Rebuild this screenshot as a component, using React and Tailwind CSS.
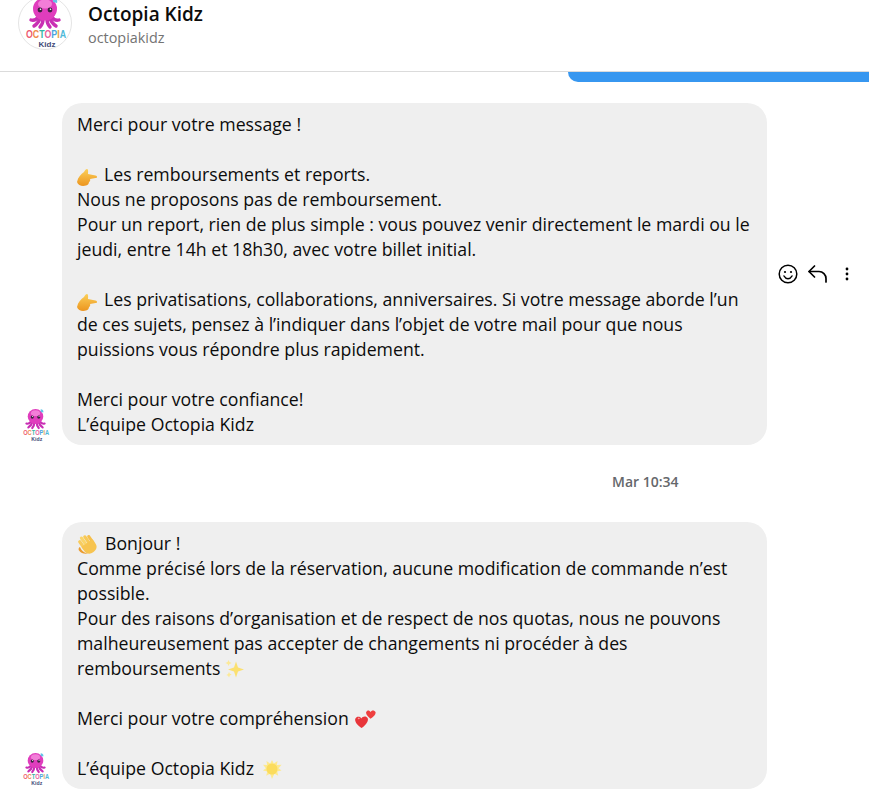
function Logo({ size, circle }) {
  return (
    <svg width={size} height={size} viewBox="0 0 54 54" className="shrink-0">
      {circle && <circle cx="27" cy="27" r="26.5" fill="#fff" stroke="#e4e4e4" />}
      {/* tentacles */}
      <g fill="none" stroke="#c92fb4" strokeWidth="3.4" strokeLinecap="round">
        <path d="M21 20c-2 3-5 5-8 4" />
        <path d="M33 20c2 3 5 5 8 4" />
        <path d="M22 22c-1 4-3 6-6 8" />
        <path d="M32 22c1 4 3 6 6 8" />
        <path d="M25 23c0 4-1 6-3 8" />
        <path d="M29 23c0 4 1 6 3 8" />
      </g>
      <ellipse cx="27" cy="13" rx="12" ry="11.500" fill="#e03dbd" />
      <ellipse cx="27" cy="8" rx="7" ry="4.500" fill="#f27ed8" />
      <path d="M35 2c3 0 5 2 4 5l-4-1z" fill="#63c4e8" />
      <circle cx="22" cy="14" r="2.400" fill="#3b2340" />
      <circle cx="32" cy="14" r="2.400" fill="#3b2340" />
      <circle cx="22.500" cy="13.200" r="0.800" fill="#fff" />
      <circle cx="32.500" cy="13.200" r="0.800" fill="#fff" />
      <text x="8" y="42" textLength="40" lengthAdjust="spacingAndGlyphs" fontSize="10.500" fontWeight="700" fontFamily="Liberation Sans, sans-serif">
        <tspan fill="#ee5a6f">O</tspan>
        <tspan fill="#f08a4b">C</tspan>
        <tspan fill="#35b6a6">T</tspan>
        <tspan fill="#e8609b">O</tspan>
        <tspan fill="#4aa5de">P</tspan>
        <tspan fill="#e8a33d">I</tspan>
        <tspan fill="#4fb9d8">A</tspan>
      </text>
      <text x="29" y="50.500" textAnchor="middle" fontSize="8" fontWeight="700" fill="#3f4a78" fontFamily="Liberation Sans, sans-serif">Kidz</text>
    </svg>
  );
}

function PointHand({ id }) {
  return (
    <svg width="20" height="17" viewBox="0 0 20 17" className="mr-[7px] inline-block align-[-5px]">
      <defs>
        <linearGradient id={id} x1="0" y1="0" x2="0" y2="1">
          <stop offset="0" stopColor="#fbcf58" />
          <stop offset="1" stopColor="#ec951f" />
        </linearGradient>
      </defs>
      <path d="M0 13C1 8 4 5 7 3 8 1 9 0 10 0c1.500 0 1 3 1 5l7.500 1.500c2 .5 2 2.500 0 2.500L13 10c.5 1 0 2.500-1 3 0 1.500-1 3-3 3.500C6 17.500 1 17 0 13z" fill={`url(#${id})`} />
    </svg>
  );
}

function WaveHand() {
  return (
    <svg width="21" height="19" viewBox="0 0 21 19" className="mr-[7px] inline-block align-[-4px]">
      <g transform="rotate(-35 11 10)">
        <rect x="4.500" y="1" width="3.200" height="11" rx="1.600" fill="#f8cc5e" />
        <rect x="8" y="-1" width="3.200" height="12" rx="1.600" fill="#fad468" />
        <rect x="11.500" y="0" width="3.200" height="12" rx="1.600" fill="#f8c955" />
        <rect x="15" y="2" width="3" height="10" rx="1.500" fill="#f6bf4a" />
        <path d="M4.500 8h13.500v5c0 4-3 6-7 6s-6.500-3-6.500-6z" fill="#f7c450" />
      </g>
      <path d="M3 12c1 3 4 6 8 6.500-3 .8-7 0-9-3-1-1.500 0-3 1-3.500z" fill="#ea9c30" />
    </svg>
  );
}

function Sparkles() {
  return (
    <svg width="19" height="18" viewBox="0 0 19 18" className="inline-block align-[-3px]">
      <path d="M11 1.500l2 5.900 6 2.100-6 2.100-2 5.900-2-5.900-6-2.100 6-2.100z" fill="#fbe070" />
      <path d="M3.500 0l1 2.100 2.100.9-2.100.9-1 2.100-.9-2.100L.5 3l2.100-.9z" fill="#fce996" />
      <path d="M4 12l.9 1.800 1.800.8-1.800.8L4 17.500l-.9-1.800-1.800-.8 1.800-.8z" fill="#fce996" />
    </svg>
  );
}

function Hearts() {
  return (
    <svg width="21" height="21" viewBox="0 0 21 21" className="ml-[2px] inline-block align-[-5px]">
      <path d="M15.500 3c.8-2 4-2.300 5 0 .6 2-1.500 4.800-5 6.700-2.600-1.800-5-4.500-4.300-6.700.8-2.300 3.500-2 4.300 0z" fill="#ef3f3f" />
      <path d="M6.500 9.500c1.100-2.400 5-2.700 6.300 0 .9 2.600-2.300 7-6.300 9.500-4.200-2.500-7.100-6.500-6.200-9.200 1-2.700 5-2.600 6.200-.3z" fill="#e8353a" />
      <path d="M2.800 9c1-.6 2-.4 2.500.4-1 0-1.700.4-2.300 1.200z" fill="#f9a0a0" />
    </svg>
  );
}

function GlowStar() {
  return (
    <svg width="20" height="19" viewBox="0 0 20 19" className="ml-[3px] inline-block align-[-4px]">
      <path d="M10 0l1.800 3.400L15.500 1l-.6 4.100 4.600-.3-2.900 3.500 2.900 2.300-4.300.8 1.100 4.400-3.900-2L10 19l-1.900-5.200-3.900 2 1.100-4.400-4.300-.8 2.900-2.300L1 4.800l4.100.3L4.500 1l3.700 2.400z" fill="#fde98f" />
      <circle cx="10" cy="9" r="5.500" fill="#fbdc5c" />
    </svg>
  );
}

function Line({ children }) {
  return <div className="h-[25px] whitespace-nowrap">{children || '\u00a0'}</div>;
}

export default function App() {
  return (
    <div className="h-[797px] w-[869px] overflow-hidden bg-white font-['Open_Sans',sans-serif] text-[#0c0c0c]">
      {/* Header */}
      <div className="flex h-[72px] gap-[16px] border-b border-[#dbdbdb] pl-[18px]">
        <div className="-mt-[4px]">
          <Logo size={54} circle />
        </div>
        <div className="pt-[2px]">
          <div className="text-[19px] leading-[24px] font-semibold">Octopia Kidz</div>
          <div className="mt-[2px] text-[14.400px] leading-[20px] text-[#737373]">octopiakidz</div>
        </div>
      </div>

      <div className="flex flex-col">
        <div className="h-[10px] w-[301px] self-end rounded-bl-[20px] bg-[#3797f0]" />

        {/* First message */}
        <div className="mt-[21px] flex items-center pl-[18px]">
          <div className="mb-[2px] self-end">
            <Logo size={35} />
          </div>
          <div className="ml-[9px] w-[705px] rounded-[20px] bg-[#efefef] px-[15px] pt-[9px] pb-[8px] text-[17.700px] leading-[25px]">
            <Line>Merci pour votre message !</Line>
            <Line />
            <Line><PointHand id="hand-a" />Les remboursements et reports.</Line>
            <Line>Nous ne proposons pas de remboursement.</Line>
            <Line>Pour un report, rien de plus simple : vous pouvez venir directement le mardi ou le</Line>
            <Line>jeudi, entre 14h et 18h30, avec votre billet initial.</Line>
            <Line />
            <Line><PointHand id="hand-b" />Les privatisations, collaborations, anniversaires. Si votre message aborde l’un</Line>
            <Line>de ces sujets, pensez à l’indiquer dans l’objet de votre mail pour que nous</Line>
            <Line>puissions vous répondre plus rapidement.</Line>
            <Line />
            <Line>Merci pour votre confiance!</Line>
            <Line>L’équipe Octopia Kidz</Line>
          </div>
          <div className="ml-[11px] flex items-center">
            <svg width="20" height="20" viewBox="0 0 20 20" fill="none" stroke="#000" strokeWidth="1.500">
              <circle cx="10" cy="10" r="8.800" />
              <circle cx="7" cy="8" r="1.100" fill="#000" stroke="none" />
              <circle cx="13" cy="8" r="1.100" fill="#000" stroke="none" />
              <path d="M6 12c1 1.800 2.400 2.800 4 2.800s3-1 4-2.800" strokeLinecap="round" />
            </svg>
            <svg width="20" height="18" viewBox="0 0 20 18" fill="none" stroke="#000" strokeWidth="1.700" strokeLinecap="round" strokeLinejoin="round" className="ml-[10px]">
              <path d="M6.500 1 1 6.500 6.500 12" />
              <path d="M1.200 6.500H11a7 7 0 0 1 7 7V17" />
            </svg>
            <svg width="4" height="14" viewBox="0 0 4 14" fill="#000" className="ml-[17px]">
              <circle cx="2" cy="2" r="1.400" />
              <circle cx="2" cy="7" r="1.400" />
              <circle cx="2" cy="12" r="1.400" />
            </svg>
          </div>
        </div>

        {/* Timestamp */}
        <div className="mt-[27px] ml-[612px] text-[14px] leading-[20px] font-semibold text-[#65676b]">Mar 10:34</div>

        {/* Second message */}
        <div className="mt-[30px] flex items-center pl-[18px]">
          <div className="mb-[2px] self-end">
            <Logo size={35} />
          </div>
          <div className="ml-[9px] w-[705px] rounded-[20px] bg-[#efefef] px-[15px] pt-[9px] pb-[8px] text-[17.700px] leading-[25px]">
            <Line><WaveHand />Bonjour !</Line>
            <Line>Comme précisé lors de la réservation, aucune modification de commande n’est</Line>
            <Line>possible.</Line>
            <Line>Pour des raisons d’organisation et de respect de nos quotas, nous ne pouvons</Line>
            <Line>malheureusement pas accepter de changements ni procéder à des</Line>
            <Line>remboursements <Sparkles /></Line>
            <Line />
            <Line>Merci pour votre compréhension <Hearts /></Line>
            <Line />
            <Line>L’équipe Octopia Kidz <GlowStar /></Line>
          </div>
        </div>
      </div>
    </div>
  );
}
